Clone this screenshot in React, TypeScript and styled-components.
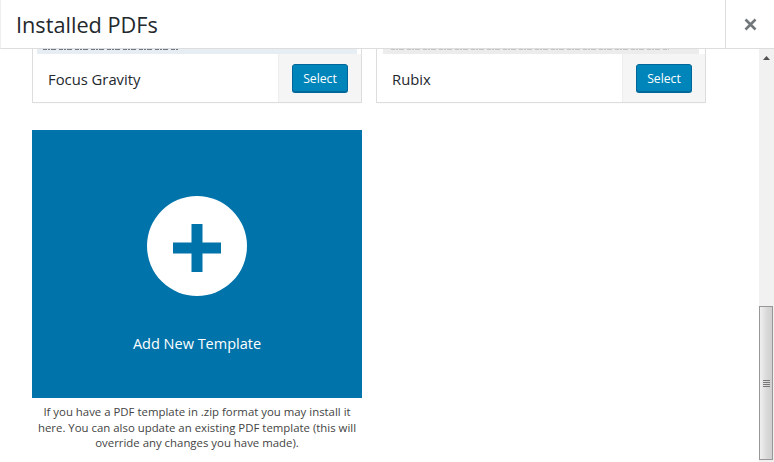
import styled, { createGlobalStyle } from 'styled-components';

const GlobalStyle = createGlobalStyle`
  html, body {
    margin: 0;
    height: 100%;
    overflow: hidden;
    background: #fff;
  }
  #root {
    height: 100%;
  }
`;

// the thumbnails are cropped so far that only a sliver of their printed lines shows
const templates = [
  { name: 'Focus Gravity', tint: '#e6edf3', ink: '#6d7784', inset: 4, lineStart: 6, lineEnd: 142 },
  { name: 'Rubix', tint: '#ececec', ink: '#c4c4c4', inset: 6, lineStart: 8, lineEnd: 286 },
];

function App() {
  return (
    <>
      <GlobalStyle />
      <Modal>
        <Header>
          <Title>Installed PDFs</Title>
          <CloseButton aria-label='close'>
            <svg width='13' height='13' viewBox='0 0 13 13'>
              <path d='M1.5 1.5l10 10M11.5 1.5l-10 10' stroke='#72777c' strokeWidth='2.6' />
            </svg>
          </CloseButton>
        </Header>
        <Body>
          <Content>
            <Grid>
              {templates.map((template) => (
                <Card key={template.name}>
                  <Preview $tint={template.tint} $inset={template.inset}>
                    <svg width='320' height='5' viewBox='0 0 320 5'>
                      <line
                        x1={template.lineStart}
                        x2={template.lineEnd}
                        y1='0.5'
                        y2='0.5'
                        stroke={template.ink}
                        strokeWidth='1'
                        strokeDasharray='4 1 2 1 5 3'
                      />
                    </svg>
                  </Preview>
                  <CardFooter>
                    <CardName>{template.name}</CardName>
                    <CardActions>
                      <SelectButton>Select</SelectButton>
                    </CardActions>
                  </CardFooter>
                </Card>
              ))}
              <AddColumn>
                <AddTile>
                  <PlusCircle>
                    <svg width='48' height='48' viewBox='0 0 48 48'>
                      <path d='M18.5 0h11v18.5H48v11H29.5V48h-11V29.5H0v-11h18.5z' fill='#0073aa' />
                    </svg>
                  </PlusCircle>
                  <AddLabel>Add New Template</AddLabel>
                </AddTile>
                <AddHelp>
                  If you have a PDF template in .zip format you may install it here. You can also
                  update an existing PDF template (this will override any changes you have made).
                </AddHelp>
              </AddColumn>
            </Grid>
          </Content>
          <Scrollbar>
            <ScrollArrow>
              <svg width='7' height='4' viewBox='0 0 7 4'>
                <path d='M3.5 0L7 4H0z' fill='#505050' />
              </svg>
            </ScrollArrow>
            <ScrollTrack>
              <ScrollThumb>
                <ThumbGrip />
                <ThumbGrip />
                <ThumbGrip />
                <ThumbGrip />
              </ScrollThumb>
            </ScrollTrack>
          </Scrollbar>
        </Body>
      </Modal>
    </>
  );
}

const Modal = styled.div`
  height: 462px;
  width: 774px;
  display: flex;
  flex-direction: column;
  overflow: hidden;
  background: #fff;
  font-family: 'Open Sans', 'Noto Sans', sans-serif;
  color: #23282d;
`;

const Header = styled.div`
  height: 48px;
  flex-shrink: 0;
  display: flex;
  align-items: stretch;
  justify-content: space-between;
  border-bottom: 1px solid #ddd;
  border-left: 1px solid #eee;
  box-sizing: content-box;
`;

const Title = styled.h1`
  margin: 0;
  padding-left: 15px;
  font-size: 21.7px;
  font-weight: 400;
  line-height: 50px;
  color: #23282d;
`;

const CloseButton = styled.div`
  width: 48px;
  border-left: 1px solid #ddd;
  display: flex;
  align-items: center;
  justify-content: center;
`;

const Body = styled.div`
  flex: 1;
  min-height: 0;
  display: flex;
`;

const Content = styled.div`
  flex: 1;
  padding: 0 0 0 32px;
  overflow: hidden;
`;

const Grid = styled.div`
  display: grid;
  grid-template-columns: 330px 330px;
  column-gap: 14px;
  row-gap: 27px;
`;

const Card = styled.div`
  height: 54px;
  box-sizing: border-box;
  border: 1px solid #ddd;
  border-top: 0;
  box-shadow: 0 1px 1px -1px rgba(0, 0, 0, 0.1);
  display: flex;
  flex-direction: column;
`;

const Preview = styled.div<{ $tint: string; $inset: number }>`
  height: 5px;
  flex-shrink: 0;
  margin: 0 ${(props) => props.$inset}px;
  background: ${(props) => props.$tint};
  overflow: hidden;

  svg {
    display: block;
  }
`;

const CardFooter = styled.div`
  flex: 1;
  min-height: 0;
  display: flex;
  align-items: stretch;
  justify-content: space-between;
`;

const CardName = styled.div`
  padding-left: 15px;
  font-size: 14.8px;
  font-weight: 500;
  line-height: 50px;
  color: #23282d;
`;

const CardActions = styled.div`
  width: 83px;
  box-sizing: border-box;
  border-left: 1px solid #eee;
  background: #f5f5f5;
  display: flex;
  align-items: flex-start;
  justify-content: center;
  padding-top: 10px;
`;

const SelectButton = styled.button`
  width: 56px;
  height: 28px;
  padding: 0;
  border: 1px solid #006799;
  border-radius: 3px;
  background: #0085ba;
  color: #fff;
  font-family: inherit;
  font-size: 12.2px;
  box-shadow: 0 1px 0 #006799;
`;

const AddColumn = styled.div`
  grid-column: 1;
`;

const AddTile = styled.div`
  height: 268px;
  background: #0073aa;
  display: flex;
  flex-direction: column;
  align-items: center;
  padding-top: 66px;
  box-sizing: border-box;
`;

const PlusCircle = styled.div`
  width: 100px;
  height: 100px;
  box-sizing: border-box;
  padding-top: 3px;
  border-radius: 50%;
  background: #fff;
  display: flex;
  align-items: center;
  justify-content: center;
`;

const AddLabel = styled.div`
  margin-top: 36px;
  color: #fff;
  font-size: 14.5px;
  line-height: 24px;
`;

const AddHelp = styled.p`
  margin: 6px 0 0;
  text-align: center;
  font-size: 11.4px;
  line-height: 15.5px;
  color: #444;
`;

const Scrollbar = styled.div`
  width: 15px;
  flex-shrink: 0;
  background: #f1f1f1;
  display: flex;
  flex-direction: column;
`;

const ScrollArrow = styled.div`
  height: 17px;
  display: flex;
  align-items: center;
  justify-content: center;
`;

const ScrollTrack = styled.div`
  flex: 1;
  display: flex;
  flex-direction: column;
  justify-content: flex-end;
  padding-bottom: 2px;
`;

const ScrollThumb = styled.div`
  height: 154px;
  margin-right: 1px;
  box-sizing: border-box;
  border: 1px solid #979797;
  background: linear-gradient(to right, #f0f0f0, #d8d8d8 60%, #cfcfcf);
  display: flex;
  flex-direction: column;
  align-items: center;
  justify-content: center;
  gap: 1px;
`;

const ThumbGrip = styled.div`
  width: 7px;
  height: 1px;
  background: #777;
`;

export default App;
